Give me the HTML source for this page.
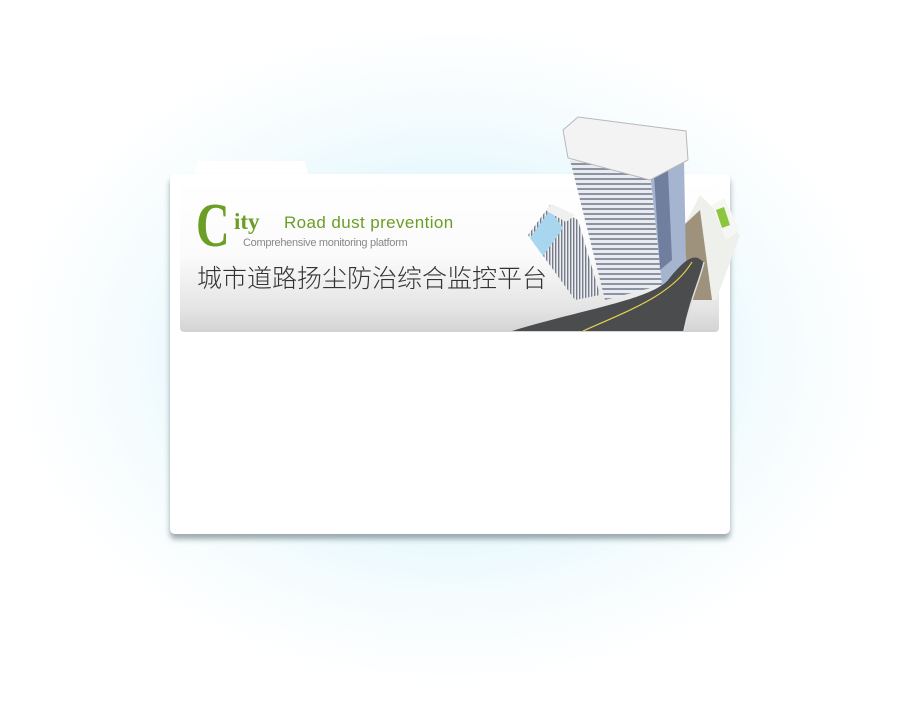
<!DOCTYPE html>
<html><head><meta charset="utf-8"><style>
html,body{margin:0;padding:0;}
body{width:901px;height:711px;position:relative;overflow:hidden;
background:radial-gradient(ellipse 440px 330px at 450px 355px,#d9f4fc 0%,#e3f7fd 45%,#f5fcfe 75%,#ffffff 100%);
font-family:"Liberation Sans","Noto Sans CJK SC",sans-serif;}
.tab{position:absolute;left:193px;top:161px;width:116px;height:16px;background:#fff;border-radius:6px 6px 0 0;clip-path:polygon(4% 0,96% 0,100% 100%,0 100%);}
.card{position:absolute;left:170px;top:174px;width:560px;height:360px;background:#fff;border-radius:5px;box-shadow:0 5px 6px rgba(80,100,105,.55);}
.banner{position:absolute;left:180px;top:180px;width:539px;height:152px;border-radius:4px;background:linear-gradient(#ffffff 0%,#fbfbfb 50%,#e4e4e4 85%,#d3d3d3 100%);}
.C{position:absolute;left:196px;top:200px;font-family:"Liberation Serif",serif;font-size:62px;line-height:52px;color:#6a9e24;font-weight:bold;transform:scaleX(.75);transform-origin:left;}
.ity{position:absolute;left:234px;top:210px;font-family:"Liberation Serif",serif;font-size:23px;line-height:24px;font-weight:bold;color:#6a9e24;}
.rd{position:absolute;left:284px;top:213px;font-size:17px;color:#6a9e24;letter-spacing:0.4px;}
.cp{position:absolute;left:243px;top:237px;font-size:11px;color:#888;letter-spacing:-0.3px;}
.cn{position:absolute;left:197px;top:264px;font-size:25px;line-height:30px;color:#333;font-weight:300;}
</style></head><body>
<div class="tab"></div>
<div class="card"></div>
<div class="banner"></div>
<div class="C">C</div>
<div class="ity">ity</div>
<div class="rd">Road dust prevention</div>
<div class="cp">Comprehensive monitoring platform</div>
<div class="cn">城市道路扬尘防治综合监控平台</div>
<svg style="position:absolute;left:0;top:0" width="901" height="711">
<defs>
<pattern id="win" width="4" height="5" patternUnits="userSpaceOnUse"><rect width="4" height="5" fill="#e8ebf0"/><rect y="3" width="4" height="2" fill="#8d93a3"/></pattern>
<pattern id="win2" width="3" height="4" patternUnits="userSpaceOnUse"><rect width="3" height="4" fill="#eceef2"/><rect width="1.4" height="4" fill="#777d88"/></pattern>
</defs>
<polygon points="682,230 700,195 740,235 716,300 688,300" fill="#eef0ec"/>
<polygon points="712,205 724,198 740,230 726,240" fill="#f6f7f5"/>
<polygon points="716,210 724,207 730,225 722,228" fill="#8cc63f"/>
<polygon points="684,225 700,210 712,300 688,300" fill="#8a7a60" opacity=".8"/>
<polygon points="528,235 550,205 578,220 600,295 575,300" fill="url(#win2)"/>
<polygon points="530,238 550,210 563,228 543,256" fill="#a8d6ee"/>
<polygon points="545,210 552,204 575,215 566,222" fill="#f0f0f0"/>
<polygon points="570,160 650,172 662,285 605,300" fill="url(#win)"/>
<polygon points="650,172 684,160 686,265 662,285" fill="#a6b5cf"/>
<polygon points="654,175 668,170 672,260 660,270" fill="#3b4a70" opacity=".5"/>
<polygon points="563,130 578,117 686,131 688,160 650,180 568,158" fill="#f3f3f3" stroke="#b8b8b8"/>
<path d="M512,331 C580,310 650,300 668,280 C680,265 690,255 698,258 L704,262 C700,280 690,300 684,331 Z" fill="#4a4c4e"/>
<path d="M583,331 C630,310 672,295 692,262" stroke="#e8d050" stroke-width="1.2" fill="none"/>
<path d="M684,331 C690,300 700,280 704,262" stroke="#ddd" stroke-width="1.5" fill="none"/>
</svg>
</body></html>
